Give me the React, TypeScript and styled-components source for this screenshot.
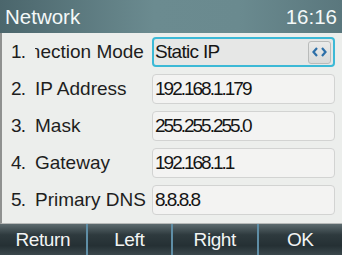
import styled, { createGlobalStyle } from "styled-components";

const GlobalStyle = createGlobalStyle`
  html, body {
    margin: 0;
    padding: 0;
    background: #e9ebe9;
  }
  body {
    font-family: "Liberation Sans", Arial, sans-serif;
  }
`

const Screen = styled.div`
  width: 342px;
  height: 255px;
  display: flex;
  flex-direction: column;
  overflow: hidden;
`

const Header = styled.div`
  height: 33px;
  flex: none;
  display: flex;
  align-items: center;
  justify-content: space-between;
  padding: 0 5px 0 5px;
  background: linear-gradient(90deg, #4b666c 0%, #6b8b90 45%, #6a8a8f 70%, #5a777d 100%);
  color: #f4f8f8;
  font-size: 20.5px;
`

const Content = styled.div`
  flex: 1;
  display: flex;
  flex-direction: column;
  gap: 7px;
  padding: 4px 7px 0 0;
  background: #eceeec;
  border-left: 2px solid #8f9190;
  border-bottom: 1px solid #b8bab9;
`

const Row = styled.div`
  height: 30px;
  display: flex;
  align-items: center;
`

const Index = styled.span`
  width: 33px;
  flex: none;
  padding-left: 9px;
  box-sizing: border-box;
  font-size: 19px;
  letter-spacing: -0.8px;
  color: #1e1e1e;
`

const Label = styled.div`
  width: 117px;
  flex: none;
  overflow: hidden;
  white-space: nowrap;
  font-size: 19px;
  color: #1e1e1e;
`

const LabelText = styled.span<{ $scroll?: number }>`
  display: inline-block;
  margin-left: ${p => (p.$scroll ? -p.$scroll : 0)}px;
`

const Field = styled.div<{ $active?: boolean }>`
  flex: 1;
  height: 100%;
  box-sizing: border-box;
  display: flex;
  align-items: center;
  justify-content: space-between;
  padding: 0 2px 0 ${p => (p.$active ? "1px" : "2px")};
  border-radius: 4px;
  border: ${p => (p.$active ? "2px solid #3cb9d6" : "1px solid #d2d3d2")};
  background: ${p => (p.$active ? "#e6e7e6" : "#f3f3f2")};
  font-size: 19px;
  color: #151515;
`

const Value = styled.span<{ $numeric?: boolean }>`
  letter-spacing: ${p => (p.$numeric ? "-2px" : "-0.7px")};
`

const Arrows = styled.div`
  width: 23px;
  height: 23px;
  box-sizing: border-box;
  border: 1px solid #b9bbba;
  border-radius: 3px;
  background: linear-gradient(#eaebea, #d9dad9);
  display: flex;
  align-items: center;
  justify-content: center;
`

const Footer = styled.div`
  height: 31px;
  flex: none;
  display: grid;
  grid-template-columns: repeat(4, 1fr);
  background: linear-gradient(#5d6b6f 0%, #2e3a3e 35%, #253034 70%, #3b484c 100%);
`

const SoftKey = styled.div<{ $first?: boolean }>`
  display: flex;
  align-items: center;
  justify-content: center;
  color: #f2f4f4;
  font-size: 19px;
  letter-spacing: -0.4px;
  border-left: ${p => (p.$first ? "none" : "2px solid #5f8ea6")};
`

const rows = [
  { label: "Connection Mode", value: "Static IP", active: true, scroll: 40 },
  { label: "IP Address", value: "192.168.1.179" },
  { label: "Mask", value: "255.255.255.0" },
  { label: "Gateway", value: "192.168.1.1" },
  { label: "Primary DNS", value: "8.8.8.8" },
]

export default function App() {
  return (
    <>
      <GlobalStyle />
      <Screen>
        <Header>
          <span>Network</span>
          <span>16:16</span>
        </Header>
        <Content>
          {rows.map((r, i) => (
            <Row key={r.label}>
              <Index>{i + 1}.</Index>
              <Label>
                <LabelText $scroll={r.scroll}>{r.label}</LabelText>
              </Label>
              <Field $active={r.active}>
                <Value $numeric={!r.active}>{r.value}</Value>
                {r.active && (
                  <Arrows>
                    <svg width="15" height="10" viewBox="0 0 15 10">
                      <path d="M5 1 L1.5 5 L5 9" fill="none" stroke="#2d6fa8" strokeWidth="2.2" />
                      <path d="M10 1 L13.5 5 L10 9" fill="none" stroke="#2d6fa8" strokeWidth="2.2" />
                    </svg>
                  </Arrows>
                )}
              </Field>
            </Row>
          ))}
        </Content>
        <Footer>
          <SoftKey $first>Return</SoftKey>
          <SoftKey>Left</SoftKey>
          <SoftKey>Right</SoftKey>
          <SoftKey>OK</SoftKey>
        </Footer>
      </Screen>
    </>
  )
}
